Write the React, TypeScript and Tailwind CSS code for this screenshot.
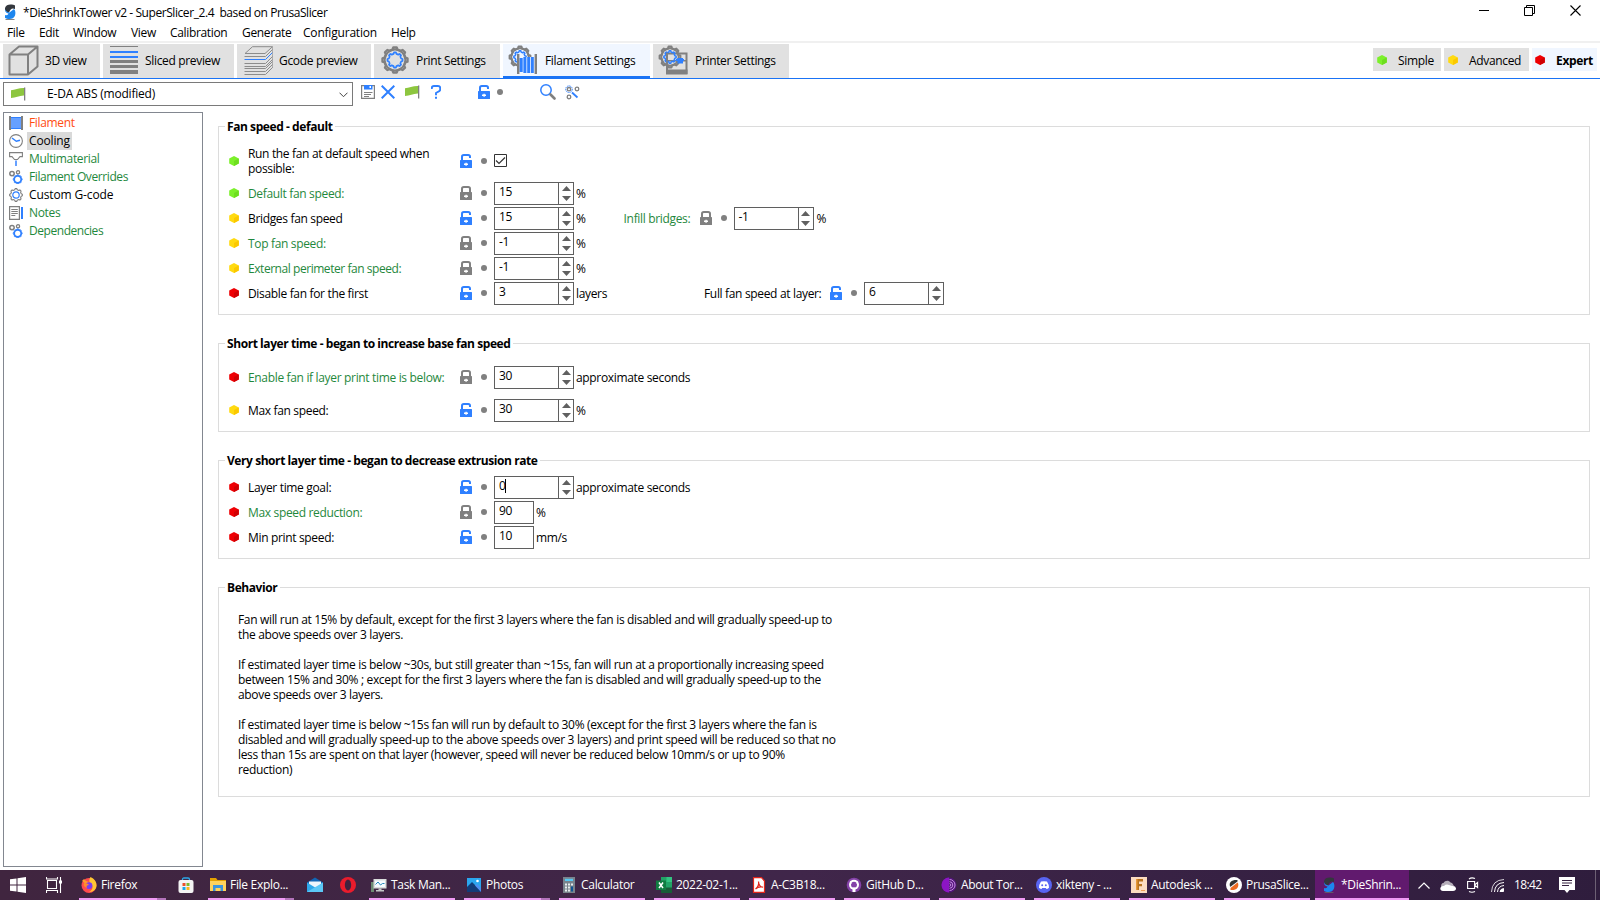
import type { ReactNode } from "react";
import clsx from "clsx";

const BLUE = "#2f80ff";
const GREY = "#808080";

/* ---------- icon helpers ---------- */

function gearPath(cx: number, cy: number, outer: number, inner: number, teeth = 8) {
  const pts: string[] = [];
  const step = (Math.PI * 2) / teeth;
  for (let i = 0; i < teeth; i++) {
    const a = i * step - Math.PI / 2;
    const offsets: [number, number][] = [
      [-0.3, inner],
      [-0.17, outer],
      [0.17, outer],
      [0.3, inner],
    ];
    for (const [o, r] of offsets) {
      pts.push(`${(cx + r * Math.cos(a + o * step)).toFixed(2)} ${(cy + r * Math.sin(a + o * step)).toFixed(2)}`);
    }
  }
  return `M${pts.join("L")}Z`;
}

const PrintGear = () => (
  <svg className="size-7" viewBox="0 0 28 28" fill="none">
    <path d={gearPath(14, 14, 12.6, 10.6)} stroke={GREY} strokeWidth="2.4" strokeLinejoin="round" />
    <circle cx="14" cy="14" r="10.4" stroke={GREY} strokeWidth="2" />
    <path d={gearPath(14, 14, 7.6, 6.3)} stroke={BLUE} strokeWidth="1.7" strokeLinejoin="round" />
  </svg>
);

const MiniGear = () => (
  <>
    <path d={gearPath(12, 12, 10.4, 8.7)} stroke={GREY} strokeWidth="2.2" strokeLinejoin="round" />
    <circle cx="12" cy="12" r="8.6" stroke={GREY} strokeWidth="1.6" />
    <path d={gearPath(12, 12, 6.2, 5)} stroke={BLUE} strokeWidth="1.5" strokeLinejoin="round" />
  </>
);

const FilamentGear = () => (
  <svg className="h-[30px] w-[30px]" viewBox="0 0 30 30" fill="none">
    <MiniGear />
    <path d="M11 12h16v16H11z" fill="#f0f6ff" />
    <path d="M11.5 13h3.2v14h-3.2zM15.4 12h3v16h-3zM19.2 12h3v16h-3zM23 12h2.8v16H23z" fill={BLUE} />
    <path d="M9 9h2.4v20H9zM26.6 9H29v20h-2.400z" fill={GREY} />
  </svg>
);

const PrinterGear = () => (
  <svg className="h-[30px] w-[30px]" viewBox="0 0 30 30" fill="none">
    <path d="M9 8.5h19.5V28H9z" stroke={GREY} strokeWidth="2" />
    <path d="M8 24.5h21.5V29.500H8zM8 15h21v1.500H8z" fill={GREY} />
    <MiniGear />
    <path d="M9 7.500v12" stroke={GREY} strokeWidth="1.500" />
    <path d="M19.500 13h5.500v5.500h-5.500z" fill={BLUE} />
    <path d="M18 15h8" stroke={BLUE} strokeWidth="2" />
  </svg>
);

const Cube = () => (
  <svg className="h-[31px] w-[31px]" viewBox="0 0 31 31" fill="none" stroke={GREY} strokeWidth="2" strokeLinejoin="round">
    <path d="M1.5 9.5h18.5v20H1.5zM1.5 9.5L11 1.500h18.500L20 9.500M29.500 1.500v20L20 29.500" />
  </svg>
);

const SlicedLayers = () => (
  <svg className="h-7 w-7" viewBox="0 0 28 28">
    <path d="M0 0h28v1H0z" fill={GREY} />
    <path d="M0 5h28v2H0zM0 10h28v2H0z" fill={BLUE} />
    <path d="M0 14h28v3H0zM0 19h28v3H0zM0 24h28v4H0z" fill={GREY} />
  </svg>
);

const GcodeLayers = () => (
  <svg className="h-[29px] w-[29px]" viewBox="0 0 29 29" fill="none" stroke="#8c8c8c">
    <path d="M1 7.500L8.500.7h20L21 7.500z" strokeWidth="1" />
    <path d="M.5 10.500h21l7-7M.5 17.500h21l7-7M.5 20.500h21l7-7M.5 22.500h21l7-7M.5 25.500h21l7-7M.5 28.500h21l7-7" />
    <path d="M.5 13.500h21l7-7" stroke={BLUE} />
    <path d="M28.500 1v21" strokeWidth=".6" />
  </svg>
);

const Flag = () => (
  <svg className="h-[14px] w-[15px]" viewBox="0 0 15 14">
    <path d="M0 3.200C4 3.200 8 .8 13 1v7.600C8 8.500 5 11 0 11z" fill="#8dc63f" />
    <path d="M13 .5h1.300V13.500H13z" fill={GREY} />
  </svg>
);

const Save = () => (
  <svg className="size-[14px]" viewBox="0 0 14 14" fill="none">
    <path d="M.6.600h12.800v12.800H.6z" stroke={GREY} strokeWidth="1.200" />
    <path d="M3 0h8.500v4.500H3z" fill={BLUE} />
    <path d="M8.500 1h1.500v2H8.500z" fill="#fff" />
    <path d="M3 7.500h8.500M3 9.500h7M3 11.500h5" stroke={GREY} />
  </svg>
);

const Cross = () => (
  <svg className="size-[14px]" viewBox="0 0 14 14" stroke={BLUE} strokeWidth="2">
    <path d="M.7.700L13.300 13.300M13.300.700L.7 13.300" />
  </svg>
);

const Question = () => (
  <svg className="h-[14px] w-[10px]" viewBox="0 0 10 14" fill="none" stroke={BLUE} strokeWidth="1.900">
    <path d="M.8 4V3Q.8 1 3 1h4Q9.200 1 9.200 3v1.500Q9.200 6 7 6.800L5 8v2.300" />
    <path d="M4 12.700h2" strokeWidth="2" />
  </svg>
);

const Lock = ({ open }: { open?: boolean }) => (
  <svg className="h-[14px] w-3 shrink-0" viewBox="0 0 12 14" fill="none">
    <path
      d={open ? "M2 7V2.800Q2 1 3.800 1h4.400Q10 1 10 2.800V4" : "M2 7V2.800Q2 1 3.800 1h4.400Q10 1 10 2.800V7"}
      stroke={open ? BLUE : GREY}
      strokeWidth="2"
    />
    <path d="M.5 6h11q.5 0 .5.500v7q0 .5-.5.500H.5q-.5 0-.5-.5v-7Q0 6 .5 6z" fill={open ? BLUE : GREY} />
    <path d="M4 9.500h4v1.500H4zM5.400 8.700h1.400v3H5.400z" fill="#fff" />
  </svg>
);

const Search = () => (
  <svg className="size-4" viewBox="0 0 16 16" fill="none">
    <circle cx="6" cy="6" r="5.200" stroke={BLUE} strokeWidth="1.500" />
    <path d="M10.500 10.500l4 4" stroke={GREY} strokeWidth="2.600" strokeLinecap="round" />
  </svg>
);

const SearchGears = () => (
  <svg className="size-[15px]" viewBox="0 0 15 15" fill="none">
    <circle cx="4" cy="4.200" r="3.300" stroke={BLUE} strokeWidth="1" strokeDasharray="1.500 .7" />
    <circle cx="4" cy="4.200" r="1.700" stroke={GREY} strokeWidth="1.400" />
    <circle cx="12" cy="4" r="1.800" stroke={GREY} strokeWidth="1.300" />
    <circle cx="4" cy="12" r="1.800" stroke={GREY} strokeWidth="1.300" />
    <path d="M7 7.500l5.500 5" stroke={BLUE} strokeWidth="1.800" />
  </svg>
);

const levelColors = {
  simple: ["#7cf02b", "#6ede1f"],
  advanced: ["#ffda11", "#fbc800"],
  expert: ["#ee0004", "#d00003"],
} as const;
type Level = keyof typeof levelColors;

const Hexagon = ({ level }: { level: Level }) => (
  <svg className="h-[10px] w-[10px] shrink-0" viewBox="0 0 10 10">
    <path d="M5 0l4.800 2.500v5L5 10 .2 7.500v-5z" fill={levelColors[level][0]} />
    <path d="M9.800 2.500v5L5 10 5 5z" fill={levelColors[level][1]} />
  </svg>
);

const Bullet = () => <span className="size-[6px] shrink-0 rounded-full bg-[#808080]" />;

const SuperSlicerLogo = ({ className }: { className?: string }) => (
  <svg className={className} viewBox="0 0 12 16">
    <path d="M11 1.500V5C8 3.500 6.500 5 5 8.500 2 8 .5 6.500 1 4 1.500 1.500 4 .500 6.500.500 8.500.500 10 .8 11 1.500z" fill="#33373d" />
    <path d="M1 5C1.500 7.500 3.500 8 5.500 8.500L10 5c1.500 1.500 1.800 4 1 6.500C10.200 14 8 15 5.500 15 3.500 15 2 14.500 1 14v-3c2 .5 3 0 3.500-1.500C2 9 .8 7.500 1 5z" fill="#1d86ee" />
    <path d="M1.500 15.500h9" stroke="#666" strokeWidth=".8" />
  </svg>
);

/* ---------- top area ---------- */

const TitleBar = () => (
  <header className="flex h-6 items-center pl-1">
    <SuperSlicerLogo className="h-4 w-3" />
    <h1 className="ml-[7px] mt-px whitespace-pre text-[12px] tracking-[-0.43px]">*DieShrinkTower v2 - SuperSlicer_2.4  based on PrusaSlicer</h1>
    <div className="mb-1 ml-auto flex items-center gap-[35px] pr-[19px]">
      <svg className="-mr-px size-[11px]" viewBox="0 0 11 11"><path d="M0 5h10v1H0z" /></svg>
      <svg className="size-[11px]" viewBox="0 0 11 11" fill="none" stroke="#000">
        <path d="M.5 2.500h8v8h-8zM2.500 2.500v-2h8v8h-2" />
      </svg>
      <svg className="size-[11px]" viewBox="0 0 11 11" stroke="#000" strokeWidth="1.100"><path d="M.5.500l10 10M10.500.500l-10 10" /></svg>
    </div>
  </header>
);

const menus: [string, string][] = [
  ["File", "w-8"],
  ["Edit", "w-[34px]"],
  ["Window", "w-[58px]"],
  ["View", "w-[39px]"],
  ["Calibration", "w-[72px]"],
  ["Generate", "w-[61px]"],
  ["Configuration", "w-[88px]"],
  ["Help", "w-10"],
];

const MenuBar = () => (
  <nav className="flex h-[17px] items-center pl-[7px]">
    {menus.map(([label, width]) => (
      <span key={label} className={clsx("shrink-0", width, label === "Configuration" && "tracking-[-0.2px]")}>{label}</span>
    ))}
  </nav>
);

const Tab = ({ icon, label, width, iconBox, active }: { icon: ReactNode; label: string; width: string; iconBox: string; active?: boolean }) => (
  <button className={clsx("flex items-center", width, active ? "h-[35px] border-b-[3px] border-[#1a73f5] bg-[#f0f6ff]" : "h-[34px] bg-[#e1e1e1] pb-[2px]")}>
    <span className={clsx("flex h-[31px] shrink-0 items-center", iconBox)}>{icon}</span>
    <span className="mt-px whitespace-nowrap">{label}</span>
  </button>
);

const Mode = ({ level, label, className }: { level: Level; label: string; className: string }) => (
  <button className={clsx("flex h-[23px] items-center", className)}>
    <Hexagon level={level} />
    <span className="ml-[11px] mt-[2px]">{label}</span>
  </button>
);

const TabBar = () => (
  <div className="flex h-[38px] border-b border-[#1a73f5] pl-[3px]">
    <div className="h-[37px] w-full">
      <div className="-ml-[3px] h-[2px] bg-[#f0f0f0]" />
      <div className="flex h-[35px] gap-[3px] pt-px">
        <Tab icon={<Cube />} label="3D view" width="w-[97px]" iconBox="w-[42px] pl-[5px]" />
        <Tab icon={<SlicedLayers />} label="Sliced preview" width="w-[131px]" iconBox="w-[42px] pl-[7px]" />
        <Tab icon={<GcodeLayers />} label="Gcode preview" width="w-[134px]" iconBox="w-[42px] pl-[7px]" />
        <Tab icon={<PrintGear />} label="Print Settings" width="w-[126px]" iconBox="w-[42px] pl-[7px]" />
        <Tab icon={<FilamentGear />} label="Filament Settings" width="w-[147px]" iconBox="w-[42px] pl-[5px]" active />
        <Tab icon={<PrinterGear />} label="Printer Settings" width="w-[136px]" iconBox="w-[42px] pl-[5px]" />
        <div className="ml-auto flex gap-[3px] pr-[3px] pt-[4px]">
          <Mode level="simple" label="Simple" className="w-[68px] bg-[#e1e1e1] pl-[4px]" />
          <Mode level="advanced" label="Advanced" className="w-[85px] bg-[#e1e1e1] pl-[4px]" />
          <Mode level="expert" label="Expert" className="w-[65px] bg-[#f0f6ff] pl-[3px] font-bold" />
        </div>
      </div>
    </div>
  </div>
);

const Toolbar = () => (
  <div className="flex h-[33px] items-start pl-[3px] pt-[3px]">
    <div className="flex h-6 w-[350px] items-center border border-[#7a7a7a] pl-[7px] pr-1">
      <Flag />
      <span className="ml-[21px] tracking-[-0.2px]">E-DA ABS (modified)</span>
      <svg className="ml-auto mt-px h-[6px] w-[9px]" viewBox="0 0 9 6" fill="none" stroke="#444"><path d="M.5.700l4 4 4-4" /></svg>
    </div>
    <div className="flex h-5 items-center pl-2">
      <Save />
      <span className="ml-1.5"><Cross /></span>
      <span className="ml-2.5"><Flag /></span>
      <span className="ml-[11px]"><Question /></span>
      <span className="ml-[37px]"><Lock open /></span>
      <span className="ml-[7px] flex"><Bullet /></span>
      <span className="ml-[37px]"><Search /></span>
      <span className="ml-[9px]"><SearchGears /></span>
    </div>
  </div>
);

/* ---------- settings tree ---------- */

const SpoolIcon = () => (
  <svg className="size-[14px]" viewBox="0 0 14 14">
    <path d="M0 0h2v14H0zM12 0h2v14h-2z" fill={GREY} />
    <path d="M2 1h10v12H2z" fill="#66a0ff" />
    <path d="M2 1h10v1H2zM2 12h10v1H2z" fill={BLUE} />
  </svg>
);
const ClockIcon = () => (
  <svg className="size-[14px]" viewBox="0 0 14 14" fill="none">
    <circle cx="7" cy="7" r="6.400" stroke={GREY} strokeWidth="1.100" />
    <path d="M3 4l4.300 3.300L11 6.300" stroke={BLUE} strokeWidth="1.500" />
  </svg>
);
const FunnelIcon = () => (
  <svg className="size-[14px]" viewBox="0 0 14 14" fill="none">
    <path d="M.6.600h12.800v4H11L8.500 7.500h-3L3 4.600H.6z" stroke={GREY} strokeWidth="1.100" />
    <path d="M6 8.500h2V14H6z" fill="#66a0ff" />
  </svg>
);
const CogsIcon = () => (
  <svg className="size-[14px]" viewBox="0 0 14 14" fill="none">
    <circle cx="3" cy="3.600" r="2.200" stroke={GREY} strokeWidth="1.500" />
    <circle cx="9" cy="2.300" r="1.600" stroke={GREY} strokeWidth="1.300" />
    <circle cx="8.700" cy="9.300" r="3.500" stroke={BLUE} strokeWidth="1.700" />
    <path d={gearPath(8.7, 9.3, 4.6, 3.8)} stroke={BLUE} strokeWidth=".7" />
  </svg>
);
const GearIcon = () => (
  <svg className="size-[14px]" viewBox="0 0 14 14" fill="none">
    <path d={gearPath(7, 7, 6.4, 5.400)} stroke={GREY} strokeWidth="1.100" strokeLinejoin="round" />
    <circle cx="7" cy="7" r="3.200" stroke={BLUE} strokeWidth="1.200" />
  </svg>
);
const NotesIcon = () => (
  <svg className="size-[14px]" viewBox="0 0 14 14" fill="none">
    <path d="M.6.600h9.800v12.800H.6z" stroke={GREY} strokeWidth="1.200" />
    <path d="M2.300 3.500h6.500M2.300 5.500h6.500M2.300 7.500h6.500M2.300 9.500h4" stroke={GREY} />
    <path d="M12 1h2v12h-2z" fill={BLUE} />
  </svg>
);

const tree: { icon: ReactNode; label: string; className: string }[] = [
  { icon: <SpoolIcon />, label: "Filament", className: "text-[#ff4d12]" },
  { icon: <ClockIcon />, label: "Cooling", className: "bg-[#d9d9d9] tracking-[-0.15px]" },
  { icon: <FunnelIcon />, label: "Multimaterial", className: "text-[#1f883d]" },
  { icon: <CogsIcon />, label: "Filament Overrides", className: "text-[#1f883d] tracking-[-0.4px]" },
  { icon: <GearIcon />, label: "Custom G-code", className: "tracking-[-0.13px]" },
  { icon: <NotesIcon />, label: "Notes", className: "text-[#1f883d]" },
  { icon: <CogsIcon />, label: "Dependencies", className: "text-[#1f883d] tracking-[-0.45px]" },
];

const Tree = () => (
  <aside className="h-[755px] w-[200px] shrink-0 border border-[#828790] pl-[5px] pt-px">
    {tree.map((item) => (
      <div key={item.label} className="flex h-[18px] items-center">
        {item.icon}
        <span className={clsx("ml-1 h-[18px] px-[2px] leading-[18px]", item.className)}>{item.label}</span>
      </div>
    ))}
  </aside>
);

/* ---------- option groups ---------- */

const Group = ({ title, className, children }: { title: string; className: string; children: ReactNode }) => (
  <section className={clsx("w-[1372px] border border-[#dcdcdc]", className)}>
    <h2 className="-mt-2 mb-[-1px] ml-[6px] w-fit bg-white pl-[2px] pr-[3px] font-bold leading-4 tracking-[-0.43px]">{title}</h2>
    {children}
  </section>
);

const Spin = ({ value, caret }: { value: string; caret?: boolean }) => (
  <div className="flex h-[23px] w-[80px] shrink-0 border border-[#5f5f5f]">
    <div className="flex h-[18px] flex-1 items-center pl-1">
      {value}
      {caret && <span className="-ml-px h-[14px] w-px bg-black" />}
    </div>
    <div className="flex w-[15px] flex-col items-center justify-center gap-[5px] border-l border-[#5f5f5f]">
      <svg className="h-[5px] w-[9px]" viewBox="0 0 9 5"><path d="M0 5L4.500 0 9 5z" fill="#606060" /></svg>
      <svg className="h-[5px] w-[9px]" viewBox="0 0 9 5"><path d="M0 0l4.500 5L9 0z" fill="#606060" /></svg>
    </div>
  </div>
);

const Field = ({ value }: { value: string }) => (
  <div className="flex h-[23px] w-10 shrink-0 items-start border border-[#5f5f5f] pl-1 leading-[18px]">{value}</div>
);

const Marks = ({ open }: { open: boolean }) => (
  <span className="mb-px mr-[7px] flex items-center gap-[9px]">
    <Lock open={open} />
    <Bullet />
  </span>
);

type OptionProps = { level: Level; label: string; system?: boolean; unit?: string; labelClass?: string; control: ReactNode; children?: ReactNode };

const Option = ({ level, label, system, unit, labelClass, control, children }: OptionProps) => (
  <div className="flex h-[25px] items-center pl-[10px]">
    <span className="mb-px flex"><Hexagon level={level} /></span>
    <span className={clsx("ml-[9px] w-[212px] shrink-0 leading-[15px]", system ? "text-[#1f883d]" : "text-black", labelClass)}>{label}</span>
    <Marks open={!system} />
    {control}
    {unit && <span className="ml-[2px] mt-px whitespace-nowrap">{unit}</span>}
    {children}
  </div>
);

const Inline = ({ label, system, value, unit, className }: { label: string; system?: boolean; value: string; unit?: string; className: string }) => (
  <div className={clsx("flex items-center", className)}>
    <span className="mt-px flex-1 whitespace-nowrap"><span className={clsx(system && "text-[#1f883d]")}>{label}</span></span>
    <Marks open={!system} />
    <Spin value={value} />
    {unit && <span className="ml-[3px] mt-px w-3">{unit}</span>}
  </div>
);

const Checkbox = () => (
  <svg className="mb-[2px] size-[13px]" viewBox="0 0 13 13" fill="none">
    <path d="M.5.500h12v12H.5z" stroke="#333" />
    <path d="M2 6.500l3 3 6-6" stroke="#333" strokeWidth="1.200" />
  </svg>
);

const Page = () => (
  <main className="ml-[15px] pt-[14px]">
    <Group title="Fan speed - default" className="h-[189px]">
      <div className="flex h-[47px] flex-col justify-center pt-[7px]">
        <Option level="simple" label="Run the fan at default speed when possible:" labelClass="pr-5" control={<Checkbox />} />
      </div>
      <Option level="simple" label="Default fan speed:" system unit="%" control={<Spin value="15" />} />
      <Option level="advanced" label="Bridges fan speed" unit="%" control={<Spin value="15" />}>
        <Inline className="ml-[38px] w-[205px]" label="Infill bridges:" system value="-1" unit="%" />
      </Option>
      <Option level="advanced" label="Top fan speed:" system unit="%" control={<Spin value="-1" />} />
      <Option level="advanced" label="External perimeter fan speed:" labelClass="tracking-[-0.45px]" system unit="%" control={<Spin value="-1" />} />
      <Option level="expert" label="Disable fan for the first" unit="layers" control={<Spin value="3" />}>
        <Inline className="ml-auto mr-[645px] w-[240px]" label="Full fan speed at layer:" value="6" />
      </Option>
    </Group>

    <Group title="Short layer time - began to increase base fan speed" className="mt-7 h-[89px]">
      <div className="flex flex-col gap-2 pt-[14px]">
        <Option level="expert" label="Enable fan if layer print time is below:" system unit="approximate seconds" control={<Spin value="30" />} />
        <Option level="advanced" label="Max fan speed:" unit="%" control={<Spin value="30" />} />
      </div>
    </Group>

    <Group title="Very short layer time - began to decrease extrusion rate" className="mt-7 h-[99px]">
      <div className="pt-[7px]">
        <Option level="expert" label="Layer time goal:" unit="approximate seconds" control={<Spin value="0" caret />} />
        <Option level="expert" label="Max speed reduction:" system unit="%" control={<Field value="90" />} />
        <Option level="expert" label="Min print speed:" unit="mm/s" control={<Field value="10" />} />
      </div>
    </Group>

    <Group title="Behavior" className="mt-7 h-[210px]">
      <div className="space-y-[15px] whitespace-pre pl-[19px] pt-[17px] leading-[15px]">
        <p>{"Fan will run at 15% by default, except for the first 3 layers where the fan is disabled and will gradually speed-up to\nthe above speeds over 3 layers."}</p>
        <p>{"If estimated layer time is below ~30s, but still greater than ~15s, fan will run at a proportionally increasing speed\nbetween 15% and 30% ; except for the first 3 layers where the fan is disabled and will gradually speed-up to the\nabove speeds over 3 layers."}</p>
        <p>{"If estimated layer time is below ~15s fan will run by default to 30% (except for the first 3 layers where the fan is\ndisabled and will gradually speed-up to the above speeds over 3 layers) and print speed will be reduced so that no\nless than 15s are spent on that layer (however, speed will never be reduced below 10mm/s or up to 90%\nreduction)"}</p>
      </div>
    </Group>
  </main>
);

/* ---------- taskbar ---------- */

const TaskIcon = ({ children }: { children: ReactNode }) => (
  <svg className="size-4 shrink-0" viewBox="0 0 16 16" fill="none">{children}</svg>
);

const icons = {
  windows: <path d="M0 2.300L6.500 1.400V7.500H0zM7.500 1.200L16 0v7.500H7.500zM0 8.500h6.500v6.100L0 13.700zM7.500 8.500H16V16l-8.500-1.200z" fill="#fff" />,
  taskView: (
    <g stroke="#fff" strokeWidth="1.100">
      <path d="M1.500 3.500h9v8h-9zM.5 0v2h11V0M.5 16v-2.500h11V16M14.500 0v16" />
      <path d="M13.500 4h2v2h-2z" fill="#fff" />
    </g>
  ),
  firefox: (
    <>
      <circle cx="8" cy="8.500" r="7.500" fill="#ff4a4f" />
      <path d="M9.500 0c5 2 7 7 5.500 11-1 2.500-4 4-7 4 5-3 4-7 1-9-1-1.500-1-4 .5-6z" fill="#ffc633" />
      <path d="M1 4l2-2 2 2 3 1-2 3z" fill="#ff9a2e" />
      <circle cx="8" cy="8.600" r="3.400" fill="#7a3df0" />
      <path d="M3 6c2 0 4 .5 5 2-2 0-3 1-2 3-3-1-4-3-3-5z" fill="#ff8a2c" />
    </>
  ),
  store: (
    <>
      <path d="M4.500 4V2.500Q4.500 1 6 1h4q1.500 0 1.500 1.500V4" stroke="#2ba7e8" strokeWidth="1.300" />
      <rect x=".5" y="3" width="15" height="13" rx="2" fill="#f3f3f3" />
      <path d="M4.500 6h3v3h-3z" fill="#e9502c" /><path d="M8.500 6h3v3h-3z" fill="#7cb82f" />
      <path d="M4.500 10h3v3h-3z" fill="#1aa5e8" /><path d="M8.500 10h3v3h-3z" fill="#fbb719" />
    </>
  ),
  explorer: (
    <>
      <path d="M0 1h6l1.500 2H16v11H0z" fill="#e5a100" />
      <path d="M0 4h16v10H0z" fill="#ffd35c" />
      <path d="M3 14V8h10v6h-2.500v-3h-5v3z" fill="#3c95dd" />
    </>
  ),
  mail: (
    <>
      <path d="M0 5.500L8 .5l8 5V15H0z" fill="#1266b5" />
      <path d="M2 4.500h12V9L8 12 2 9z" fill="#eef6fc" />
      <path d="M0 5.500l9 5.500L16 5.500V15H0z" fill="#2fa8ea" />
      <path d="M0 15l16-9.500V15z" fill="#5cc8f6" />
    </>
  ),
  opera: <><circle cx="8" cy="8" r="8" fill="#ea1c2c" /><ellipse cx="8" cy="8" rx="3.200" ry="5.400" fill="#40223f" /></>,
  taskManager: (
    <>
      <path d="M0 5h3v10H0z" fill="#6c8a73" />
      <path d="M2.500 2h13v9.500h-13z" fill="#d9dcdc" />
      <path d="M4 3.500h10V10H4z" fill="#f5fbff" />
      <path d="M4.500 7.500l2.500-2.500 2.500 3 2-1.500 2 0" stroke="#2487ba" />
      <path d="M7.500 11.500h3V13H13v1.500H5V13h2.500z" fill="#c3c7c7" />
    </>
  ),
  photos: (
    <>
      <path d="M1 1h14v14H1z" fill="#2aa6ee" />
      <path d="M1 10l5-5 9 9v1H1z" fill="#123c78" /><path d="M9 8.500L11 7l4 4v4z" fill="#4f8ff0" />
      <circle cx="11.500" cy="4" r="1.300" fill="#fff" />
    </>
  ),
  calculator: (
    <>
      <path d="M2 0h12v16H2z" fill="#79828c" /><path d="M4 1.800h8V4H4z" fill="#56c8f5" />
      <path d="M4 6.500h2v2H4zM7 6.500h2v2H7zM10 6.500h2v2h-2zM4 9.500h2v2H4zM7 9.500h2v2H7zM4 12.500h2v2H4zM7 12.500h2v2H7z" fill="#e8edf0" />
      <path d="M10 9.500h2v5h-2z" fill="#0d5496" />
    </>
  ),
  excel: (
    <>
      <path d="M5 0h11v16H5z" fill="#21a366" /><path d="M10.500 0H16v5h-5.500z" fill="#33c481" /><path d="M5 10.500h11V16H5z" fill="#185c37" />
      <path d="M0 3.500h10v9.500H0z" fill="#107c41" /><path d="M3 5.500l4 5.500M7 5.500L3 11" stroke="#fff" strokeWidth="1.500" />
    </>
  ),
  pdf: (
    <>
      <path d="M3 .7h7.500L13.500 4v11.300h-11V.7z" fill="#fff" stroke="#e3261b" strokeWidth="1.200" />
      <path d="M4.500 12c2.500-2 3.500-5 3-7.500 0 3 2 6 4.500 5.500-2.500-.5-5.500 0-7.500 2z" stroke="#e3261b" strokeWidth="1.200" />
    </>
  ),
  github: (
    <>
      <circle cx="8" cy="8" r="7.300" fill="#8442a8" />
      <circle cx="8" cy="7.700" r="5" fill="#fff" /><circle cx="8" cy="7.700" r="3" fill="#8442a8" />
      <path d="M4 3.500v3h2zM12 3.500v3h-2z" fill="#fff" /><path d="M6.500 10.500h3V15h-3z" fill="#fff" />
    </>
  ),
  tor: (
    <>
      <circle cx="8" cy="8" r="7.500" fill="#54147d" /><path d="M8 .5a7.500 7.500 0 000 15z" fill="#8b15c4" />
      <path d="M8.500 2.500a5.500 5.500 0 010 11M8.500 4.700a3.300 3.300 0 010 6.600M8.500 6.700a1.300 1.300 0 010 2.600" stroke="#cf9be8" strokeWidth=".9" />
    </>
  ),
  discord: (
    <>
      <circle cx="8" cy="8" r="8" fill="#5865f2" />
      <path d="M5 4.500Q8 3.800 11 4.500q2 3 2 6.200-1.500 1.200-2.500 1.200l-.7-1H6.200l-.7 1q-1 0-2.500-1.200Q3 7.500 5 4.500z" fill="#fff" />
      <circle cx="6.200" cy="8.300" r="1" fill="#5865f2" /><circle cx="9.800" cy="8.300" r="1" fill="#5865f2" />
    </>
  ),
  autodesk: (
    <>
      <path d="M0 0h16v16H0z" fill="#fbdcc0" /><path d="M5 2h7v2.500H8V7h3v2.200H8V13H5z" fill="#b9731d" />
      <path d="M5 2h1.500v11H5z" fill="#e99a36" /><path d="M10 13.500h4" stroke="#ee9f56" />
    </>
  ),
  prusa: (
    <>
      <circle cx="8" cy="8" r="8" fill="#fff" />
      <path d="M4 9.500C2.500 5 6 2.500 11.500 3v1.500L4.500 9.800z" fill="#343434" /><path d="M12 6C13.500 10.500 10 13.800 4.500 13v-2L11.500 5.500z" fill="#ed6b21" />
    </>
  ),
};

type Task = { icon: keyof typeof icons; label: string; width: string; stacked?: boolean };

const TaskButton = ({ icon, label, width, stacked }: Task) => (
  <button className={clsx("flex h-[30px] shrink-0 flex-col justify-between", width)}>
    <span className="flex h-7 items-center gap-1 pl-[2px] pt-[2px]">
      <TaskIcon>{icons[icon]}</TaskIcon>
      <span className="whitespace-nowrap">{label}</span>
    </span>
    <span className="flex h-[2px] w-full">
      <span className="h-full flex-1 bg-[#f09bf5]" />
      {stacked && <span className="h-full w-[9px] bg-[#b374bb]" />}
    </span>
  </button>
);

const Pinned = ({ icon, className }: { icon: keyof typeof icons; className: string }) => (
  <button className={clsx("flex h-[30px] w-4 items-center", className)}><TaskIcon>{icons[icon]}</TaskIcon></button>
);

const runningTasks: Task[] = [
  { icon: "taskManager", label: "Task Man...", width: "w-[86px]" },
  { icon: "photos", label: "Photos", width: "w-[86px]", stacked: true },
  { icon: "calculator", label: "Calculator", width: "w-[86px]" },
  { icon: "excel", label: "2022-02-1...", width: "w-[86px]" },
  { icon: "pdf", label: "A-C3B18...", width: "w-[86px]" },
  { icon: "github", label: "GitHub D...", width: "w-[86px]" },
  { icon: "tor", label: "About Tor...", width: "w-[86px]" },
  { icon: "discord", label: "xikteny - ...", width: "w-[86px]" },
  { icon: "autodesk", label: "Autodesk ...", width: "w-[86px]" },
  { icon: "prusa", label: "PrusaSlice...", width: "w-[86px]" },
];

const Taskbar = () => (
  <footer className="flex h-[30px] bg-linear-to-r from-[#40253f] via-[#40264a] to-[#2f1d3d] tracking-[-0.3px] text-white">
    <Pinned icon="windows" className="ml-[10px]" />
    <Pinned icon="taskView" className="ml-5" />
    <div className="ml-[17px] flex"><TaskButton icon="firefox" label="Firefox" width="w-[87px]" stacked /></div>
    <Pinned icon="store" className="ml-3" />
    <div className="ml-[14px] flex"><TaskButton icon="explorer" label="File Explo..." width="w-[86px]" stacked /></div>
    <Pinned icon="mail" className="ml-[13px]" />
    <Pinned icon="opera" className="ml-[17px]" />
    <div className="ml-[13px] flex gap-[9px]">
      {runningTasks.map((task) => <TaskButton key={task.label} {...task} />)}
    </div>
    <button className="ml-[5px] flex h-[30px] w-[94px] flex-col border-b-2 border-[#f09bf5] bg-[#611a6e]">
      <span className="flex h-7 items-center pl-2 pt-[2px]">
        <SuperSlicerLogo className="h-4 w-3" />
        <span className="ml-1.5">*DieShrin...</span>
      </span>
    </button>
    <div className="flex flex-1 items-center">
      <svg className="ml-[9px] h-[7px] w-3" viewBox="0 0 12 7" fill="none" stroke="#fff" strokeWidth="1.200"><path d="M.5 6.500L6 1l5.500 5.500" /></svg>
      <svg className="ml-[10px] h-[11px] w-4" viewBox="0 0 16 11">
        <path d="M2 8C0 5 2 3 3.500 3 5 0 9 0 10.500 2.500 13 3 13 5 14 6z" fill="#b5adb9" />
        <path d="M3 11Q0 10.500 .3 8 1 5.500 4 6 6 3.800 9 5l3 1q3.500-.5 4 2.300Q16 11 13 11z" fill="#fff" />
      </svg>
      <svg className="ml-[11px] h-4 w-3" viewBox="0 0 12 16" fill="none" stroke="#fff" strokeWidth="1.100">
        <path d="M.6 4.500h7v7h-7zM7.600 8l3-2.500v5zM2 2Q4.500 0 8 1.500M2 14.500q3 1.500 6 0" />
      </svg>
      <svg className="ml-3 h-[13px] w-[13px]" viewBox="0 0 13 13" fill="none" stroke="#fff">
        <path d="M.5 13Q1 1 13 .500" strokeWidth=".8" /><path d="M3.500 13Q4 4 13 3.500M6.500 13Q7 7 13 6.500" /><path d="M9 12.500Q9.500 10 12.500 9.500v3z" fill="#fff" />
      </svg>
      <time className="ml-2.5 tracking-[-0.6px]">18:42</time>
      <svg className="ml-auto mr-5 h-4 w-4" viewBox="0 0 16 16">
        <path d="M0 0h16v13h-5.500L8 16l-2.500-3H0z" fill="#fff" /><path d="M3 3.500h10M3 6h10M3 8.500h7" stroke="#35203f" />
      </svg>
      <span className="mr-1 h-[30px] w-px bg-[#6d6074]" />
    </div>
  </footer>
);

export default function App() {
  return (
    <div className="flex h-[900px] w-[1600px] flex-col overflow-hidden bg-white font-['Open_Sans','Noto_Sans',sans-serif] text-[12px] leading-4 tracking-[-0.335px] text-black">
      <TitleBar />
      <MenuBar />
      <TabBar />
      <Toolbar />
      <div className="flex h-[758px] pl-[3px]">
        <Tree />
        <Page />
      </div>
      <Taskbar />
    </div>
  );
}
